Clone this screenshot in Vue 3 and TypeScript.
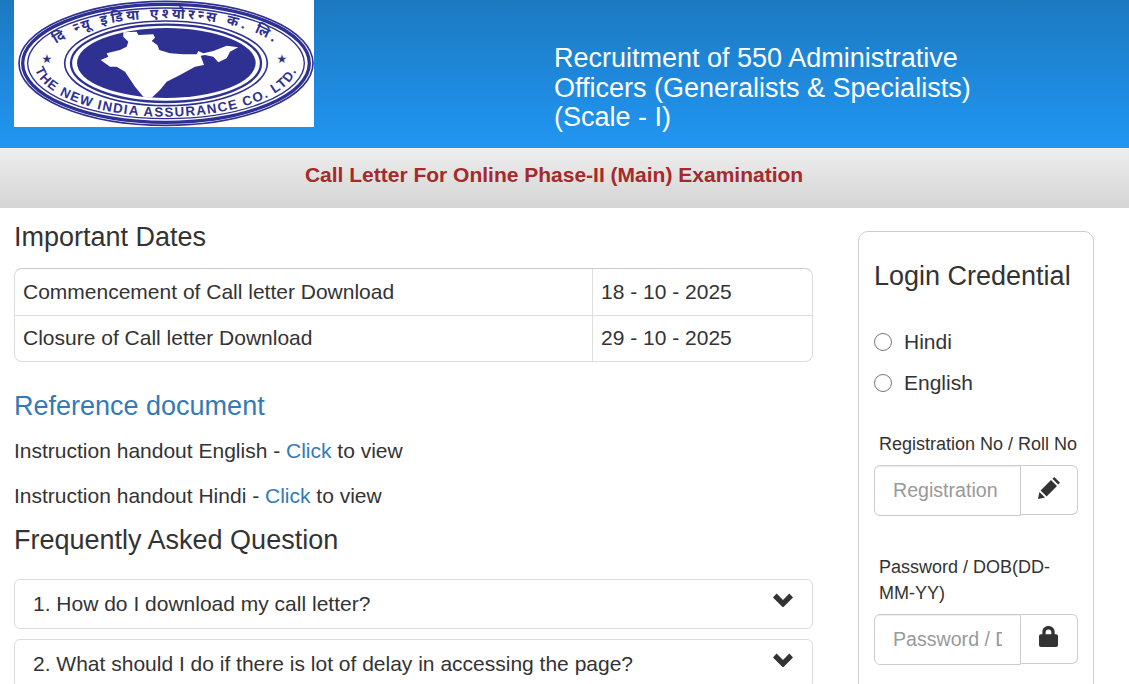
<script setup lang="ts">
const dates: { label: string; value: string }[] = [
  { label: 'Commencement of Call letter Download', value: '18 - 10 - 2025' },
  { label: 'Closure of Call letter Download', value: '29 - 10 - 2025' },
]
const docs: { lead: string }[] = [
  { lead: 'Instruction handout English - ' },
  { lead: 'Instruction handout Hindi - ' },
]
const faqs: string[] = [
  '1. How do I download my call letter?',
  '2. What should I do if there is lot of delay in accessing the page?',
]
</script>

<template>
  <div class="page">
    <header class="top">
      <svg class="logo" viewBox="42 0 900 381" width="300" height="127" aria-label="The New India Assurance Co. Ltd.">
        <rect x="42" y="0" width="900" height="381" fill="#fff" />
        <defs>
          <path id="arcBottom" d="M 103 190 A 395 160 0 0 0 893 190" />
          <path id="arcTop" d="M 133 190 A 365 135 0 0 1 863 190" />
        </defs>
        <g fill="none" stroke="#2e3192">
          <ellipse cx="498" cy="190" rx="441" ry="186" stroke-width="5" />
          <ellipse cx="498" cy="190" rx="430" ry="177" stroke-width="10" />
          <ellipse cx="498" cy="190" rx="415" ry="166" stroke-width="4" />
          <ellipse cx="498" cy="190" rx="304" ry="127" stroke-width="5" />
          <ellipse cx="498" cy="190" rx="285" ry="116" stroke-width="7" />
        </g>
        <ellipse cx="499" cy="189" rx="268" ry="105" fill="#2e3192" />
        <path
          fill="#fff"
          transform="translate(210 45)"
          d="M160 52 L200 50 L205 60 L250 58 L255 68 L245 78 L262 90 L268 105 L300 115 L340 118 L380 118 L385 108 L400 115 L430 108 L470 92 L505 97 L480 110 L470 130 L445 142 L430 125 L405 120 L392 122 L402 150 L375 155 L330 180 L290 200 L270 225 L245 248 L220 245 L195 215 L165 170 L140 155 L120 155 L92 135 L115 125 L110 115 L150 105 L170 95 L175 80 L160 65 Z"
        />
        <text class="arc-hi"><textPath href="#arcTop" startOffset="50%" text-anchor="middle">दि न्यू इंडिया एश्योरन्स कं. लि.</textPath></text>
        <text class="arc-en"><textPath href="#arcBottom" startOffset="50%" text-anchor="middle">THE NEW INDIA ASSURANCE CO. LTD.</textPath></text>
        <text class="star" x="141" y="190" text-anchor="middle">★</text>
        <text class="star" x="846" y="190" text-anchor="middle">★</text>
      </svg>
      <h1 class="title">Recruitment of 550 Administrative Officers (Generalists &amp; Specialists) (Scale - I)</h1>
    </header>

    <div class="banner">Call Letter For Online Phase-II (Main) Examination</div>

    <main class="content">
      <section class="left">
        <h2 class="h-dates">Important Dates</h2>
        <div class="dates">
          <div v-for="d in dates" :key="d.label" class="date-row">
            <div class="date-label">{{ d.label }}</div>
            <div class="date-value">{{ d.value }}</div>
          </div>
        </div>

        <h2 class="h-ref">Reference document</h2>
        <p v-for="d in docs" :key="d.lead" class="doc">{{ d.lead }}<a class="link">Click</a> to view</p>

        <h2 class="h-faq">Frequently Asked Question</h2>
        <div v-for="q in faqs" :key="q" class="faq">
          <span>{{ q }}</span>
          <svg class="chev" viewBox="0 0 20 14" width="20" height="14">
            <path fill="#333" d="M10 14.5 L0 4.5 L3.6 0.6 L10 7 L16.4 0.6 L20 4.5 Z" />
          </svg>
        </div>
      </section>

      <aside class="card">
        <h3 class="card-title">Login Credential</h3>
        <label class="radio"><input type="radio" name="lang" /><span>Hindi</span></label>
        <label class="radio"><input type="radio" name="lang" /><span>English</span></label>

        <div class="field first">
          <div class="field-label">Registration No / Roll No</div>
          <div class="group">
            <input class="input" type="text" placeholder="Registration" />
            <span class="addon">
              <svg class="pencil" viewBox="0 0 22 22" width="22" height="22">
                <path fill="#333" d="M0 22 L1.4 15 L7 20.6 Z M2.6 13.4 L13 3 L19 9 L8.6 19.4 Z M14.4 1.8 L15.8 0.4 Q16.3 0 16.8 0.4 L21.6 5.2 Q22 5.7 21.6 6.2 L20.2 7.6 Z" />
              </svg>
            </span>
          </div>
        </div>

        <div class="field">
          <div class="field-label">Password / DOB(DD-MM-YY)</div>
          <div class="group">
            <input class="input" type="password" placeholder="Password / DOB" />
            <span class="addon">
              <svg class="lock" viewBox="0 0 20 22" width="19" height="21">
                <path fill="#333" fill-rule="evenodd" d="M3.5 8.5 V6.5 C3.5 2.4 6.2 0 10 0 C13.8 0 16.5 2.4 16.5 6.5 V8.5 H18 Q20 8.5 20 10.5 V20 Q20 22 18 22 H2 Q0 22 0 20 V10.5 Q0 8.5 2 8.5 Z M7 8.5 H13 V6.5 C13 4.6 12 3.5 10 3.5 C8 3.5 7 4.6 7 6.5 Z" />
              </svg>
            </span>
          </div>
        </div>
      </aside>
    </main>
  </div>
</template>

<style>
html, body { overflow: hidden; background: #fff; }
</style>

<style scoped>
.page {
  font-family: "Liberation Sans", Arial, sans-serif;
  color: #333;
  font-size: 21px;
  height: 684px;
  overflow: hidden;
}
.top {
  height: 148px;
  display: flex;
  align-items: flex-start;
  padding-left: 14px;
  background: linear-gradient(to bottom, #1c79c0, #2196f3);
}
.logo { display: block; flex: none; }
.arc-en {
  font: bold 40px "Liberation Sans", sans-serif;
  fill: #2e3192;
  letter-spacing: 4px;
}
.arc-hi {
  font: bold 42px "Noto Sans", "DejaVu Sans", sans-serif;
  fill: #2e3192;
  letter-spacing: 10px;
}
.star { font: 36px "DejaVu Sans", sans-serif; fill: #2e3192; }
.title {
  margin: 44px 0 0 240px;
  width: 430px;
  font-size: 27px;
  line-height: 29.6px;
  font-weight: 400;
  color: #fff;
}
.banner {
  height: 60px;
  box-sizing: border-box;
  padding: 0 21px 6px 0;
  display: flex;
  align-items: center;
  justify-content: center;
  font-size: 21px;
  font-weight: 700;
  color: #a52a2a;
  background: linear-gradient(to bottom, #eeeeee, #d4d4d4);
}
.content {
  display: flex;
  align-items: flex-start;
  padding: 0 35px 0 14px;
}
.left { width: 799px; flex: none; }
h2 {
  margin: 0;
  font-size: 27px;
  font-weight: 400;
  line-height: 30px;
}
.h-dates { margin-top: 14px; }
.dates {
  margin-top: 16px;
  border: 1px solid #ddd;
  border-top-color: #ccc;
  border-radius: 8px;
}
.date-row { display: flex; height: 46px; }
.date-row + .date-row { height: 45px; border-top: 1px solid #ddd; }
.date-row + .date-row .date-label,
.date-row + .date-row .date-value { line-height: 44px; }
.date-label {
  width: 569px;
  padding-left: 8px;
  border-right: 1px solid #ddd;
  line-height: 46px;
}
.date-value { padding-left: 8px; line-height: 46px; }
.h-ref { margin-top: 29px; color: #337ab7; }
.doc { margin: 0; height: 45px; line-height: 45px; }
.doc:first-of-type { margin-top: 7px; }
.link { color: #337ab7; }
.h-faq { margin-top: 7px; }
.faq {
  position: relative;
  height: 50px;
  box-sizing: border-box;
  margin-top: 10px;
  padding-left: 18px;
  border: 1px solid #ddd;
  border-radius: 6px;
  line-height: 48px;
}
.h-faq + .faq { margin-top: 24px; }
.chev { position: absolute; top: 13px; right: 19px; }
.card {
  width: 236px;
  height: 600px;
  box-sizing: border-box;
  flex: none;
  margin: 23px 0 0 45px;
  padding: 0 15px;
  border: 1px solid #ccc;
  border-radius: 10px;
}
.card-title {
  margin: 29px 0 0;
  font-size: 27px;
  font-weight: 400;
  line-height: 30px;
}
.radio {
  display: flex;
  align-items: center;
  height: 41px;
}
.card-title + .radio { margin-top: 30px; }
.radio input {
  appearance: none;
  width: 18px;
  height: 18px;
  margin: 0 12px 0 0;
  border: 1.5px solid #767676;
  border-radius: 50%;
  background: #fff;
  flex: none;
}
.field { margin-top: 38px; }
.field.first { margin-top: 28px; }
.field-label {
  padding-left: 5px;
  font-size: 18px;
  line-height: 26px;
  margin-bottom: 8px;
}
.group { display: flex; align-items: flex-start; }
.input {
  width: 147px;
  height: 51px;
  flex: none;
  box-sizing: border-box;
  padding: 6px 18px;
  font: 19.6px "Liberation Sans", Arial, sans-serif;
  color: #555;
  background: #fff;
  border: 1px solid #ccc;
  border-radius: 6px 0 0 6px;
  box-shadow: inset 0 1px 1px rgba(0, 0, 0, .075);
  outline: none;
}
.input::placeholder { color: #999; opacity: 1; }
.addon {
  width: 57px;
  height: 50px;
  box-sizing: border-box;
  display: flex;
  align-items: center;
  justify-content: center;
  border: 1px solid #ccc;
  border-left: 0;
  border-radius: 0 6px 6px 0;
}
.pencil { margin-bottom: 4px; }
.lock { margin: 0 2px 6px 0; }
</style>
